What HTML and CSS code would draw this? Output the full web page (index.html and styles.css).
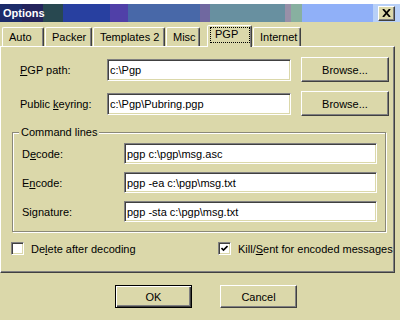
FILE: index.html
```html
<!DOCTYPE html>
<html lang="en">
<head>
    <meta charset="UTF-8">
    <title>Options</title>
    <link rel="stylesheet" href="styles.css">
</head>
<body>
    <div class="window">
        <div class="top-strip"></div>

        <div class="titlebar">
            <span class="title">Options</span>
            <span class="close">
                <svg width="9" height="8" viewBox="0 0 9 8"><path d="M1 0 L8 8 M8 0 L1 8" stroke="#000" stroke-width="1.8"/></svg>
            </span>
        </div>

        <div class="tabs">
            <div class="tab tab-auto">Auto</div>
            <div class="tab tab-packer">Packer</div>
            <div class="tab tab-templates">Templates 2</div>
            <div class="tab tab-misc">Misc</div>
            <div class="tab tab-pgp active"><span class="focus">PGP</span></div>
            <div class="tab tab-internet">Internet</div>
        </div>

        <div class="panel">
            <div class="row">
                <span class="label"><u>P</u>GP path:</span>
                <div class="field path-field">c:\Pgp</div>
                <div class="btn browse">Browse...</div>
            </div>
            <div class="row row-second">
                <span class="label">Public <u>k</u>eyring:</span>
                <div class="field path-field">c:\Pgp\Pubring.pgp</div>
                <div class="btn browse">Browse...</div>
            </div>

            <fieldset class="group">
                <legend>Command lines</legend>
                <div class="cmd-row">
                    <span class="cmd-label">D<u>e</u>code:</span>
                    <div class="field cmd-field">pgp c:\pgp\msg.asc</div>
                </div>
                <div class="cmd-row">
                    <span class="cmd-label">E<u>n</u>code:</span>
                    <div class="field cmd-field">pgp -ea c:\pgp\msg.txt</div>
                </div>
                <div class="cmd-row">
                    <span class="cmd-label">Signature:</span>
                    <div class="field cmd-field">pgp -sta c:\pgp\msg.txt</div>
                </div>
            </fieldset>

            <div class="checks">
                <div class="check check-delete">
                    <span class="box"></span>
                    <span>De<u>l</u>ete after decoding</span>
                </div>
                <div class="check">
                    <span class="box">
                        <svg width="7" height="7" viewBox="0 0 7 7"><path d="M0.5 3 L2.5 5 L6.5 1" fill="none" stroke="#000" stroke-width="1.6"/></svg>
                    </span>
                    <span>Kill/<u>S</u>ent for encoded messages</span>
                </div>
            </div>
        </div>

        <div class="footer">
            <div class="btn dialog-btn default">OK</div>
            <div class="btn dialog-btn">Cancel</div>
        </div>
    </div>
</body>
</html>
```

FILE: styles.css
```css
* {
    box-sizing: border-box;
}

body {
    margin: 0;
    font-family: "Liberation Sans", Arial, sans-serif;
    font-size: 11px;
    color: #000;
    background-color: #dbd8aa;
}

.window {
    width: 400px;
    height: 320px;
    background-color: #dbd8aa;
    overflow: hidden;
}

.top-strip {
    height: 4px;
    background-color: #fff;
}

/* Title bar */
.titlebar {
    height: 18px;
    display: flex;
    align-items: center;
    justify-content: space-between;
    padding: 0 5px 0 3px;
    background: linear-gradient(to right,
        #1c2c6a 0 22px,
        #24245c 22px 43px,
        #284850 43px 63px,
        #2840a0 63px 110px,
        #5040a8 110px 128px,
        #4868a8 128px 200px,
        #7068a0 200px 210px,
        #6890a0 210px 285px,
        #9890a8 285px 291px,
        #88b0a0 291px 302px,
        #90b0f8 302px 373px,
        #b8d0f8 373px);
}

.title {
    color: #fff;
    font-weight: bold;
}

.close {
    width: 17px;
    height: 15px;
    display: flex;
    align-items: center;
    justify-content: center;
    background-color: #dbd8aa;
    border: 1px solid;
    border-color: #fff #404040 #404040 #fff;
    box-shadow: inset -1px -1px #808080;
}

/* Tabs */
.tabs {
    height: 24px;
    display: flex;
    align-items: flex-end;
    padding-left: 2px;
}

.tab {
    height: 19px;
    padding: 3px 0 0 6px;
    margin-right: 1px;
    border: 1px solid;
    border-bottom: none;
    border-color: #fff #404040 transparent #fff;
    border-radius: 2px 2px 0 0;
    box-shadow: inset -1px 0 #808080;
    white-space: nowrap;
}

.tab-auto { width: 42px; }
.tab-packer { width: 47px; }
.tab-templates { width: 72px; }
.tab-misc { width: 34px; margin-right: 7px; }
.tab-pgp { width: 45px; }
.tab-internet { width: 48px; }

.tab.active {
    height: 22px;
    margin-bottom: -1px;
    padding: 1px 0 0 2px;
    background-color: #dbd8aa;
    position: relative;
    z-index: 1;
}

.focus {
    display: block;
    width: 40px;
    height: 16px;
    padding: 1px 0 0 5px;
    outline: 1px dotted #000;
    outline-offset: -1px;
}

/* Panel */
.panel {
    width: 395px;
    height: 227px;
    padding: 10px 0 0 10px;
    border: 1px solid;
    border-color: #fff #404040 #404040 #fff;
    box-shadow: inset -1px -1px #808080;
}

.row {
    height: 25px;
    display: flex;
    align-items: center;
    padding-left: 9px;
}

.row-second {
    margin-top: 9px;
}

.label {
    width: 87px;
}

.field {
    height: 22px;
    display: flex;
    align-items: center;
    padding-left: 2px;
    background-color: #fff;
    border: 1px solid;
    border-color: #808080 #fff #fff #808080;
    box-shadow: inset 1px 1px #404040, inset -1px -1px #dbd8aa;
    white-space: nowrap;
    overflow: hidden;
}

.path-field {
    width: 184px;
}

.btn {
    display: flex;
    align-items: center;
    justify-content: center;
    background-color: #dbd8aa;
    border: 1px solid;
    border-color: #fff #404040 #404040 #fff;
    box-shadow: inset -1px -1px #808080;
}

.browse {
    width: 88px;
    height: 25px;
    margin-left: 10px;
}

/* Command lines group */
.group {
    width: 374px;
    margin: 10px 0 0 1px;
    padding: 4px 6px 9px 9px;
    border: 1px solid #8a8878;
    box-shadow: inset 1px 1px #fff, 1px 1px #fff;
    min-inline-size: 0;
}

.group legend {
    padding: 0 2px;
    margin-left: -3px;
    line-height: 13px;
    background-color: #dbd8aa;
}

.cmd-row {
    height: 21px;
    display: flex;
    align-items: center;
}

.cmd-row + .cmd-row {
    margin-top: 8px;
}

.cmd-label {
    width: 102px;
}

.cmd-field {
    width: 253px;
    height: 21px;
}

/* Checkboxes */
.checks {
    display: flex;
    align-items: center;
    margin-top: 10px;
    height: 13px;
}

.check {
    display: flex;
    align-items: center;
    gap: 7px;
    white-space: nowrap;
}

.check-delete {
    width: 207px;
}

.box {
    width: 13px;
    height: 13px;
    display: flex;
    align-items: center;
    justify-content: center;
    background-color: #fff;
    border: 1px solid;
    border-color: #808080 #fff #fff #808080;
    box-shadow: inset 1px 1px #404040, inset -1px -1px #dbd8aa;
}

/* Dialog buttons */
.footer {
    display: flex;
    gap: 28px;
    padding: 12px 0 0 115px;
}

.dialog-btn {
    width: 77px;
    height: 23px;
}

.dialog-btn.default {
    border: 1px solid #000;
    box-shadow: inset 1px 1px #fff, inset -1px -1px #404040, inset -2px -2px #808080;
}
```
